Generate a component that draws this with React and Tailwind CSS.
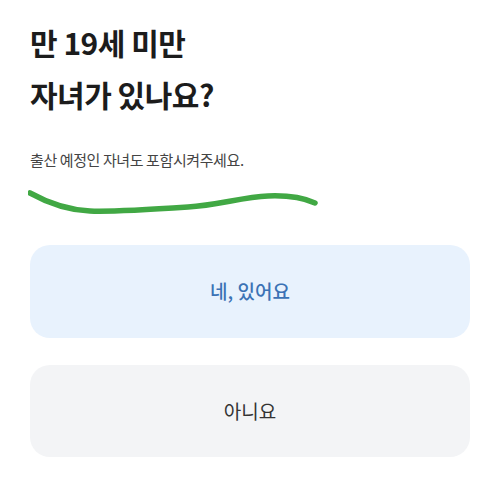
export default function App() {
  return (
    <div
      className="min-h-[499px] w-[500px] bg-white px-[30px] pt-[16px]"
      style={{ fontFamily: '"Noto Sans CJK KR", "Noto Sans", sans-serif' }}
    >
      <h1 className="text-[30px] font-semibold leading-[52px] tracking-[-0.5px] text-[#1c1c1c]">
        만 19세 미만
        <br />
        자녀가 있나요?
      </h1>

      <p className="mt-[29px] text-[15px] leading-[22px] tracking-[-0.4px] text-[#444]">
        출산 예정인 자녀도 포함시켜주세요.
      </p>

      <svg width="300" height="30" viewBox="0 0 300 30" className="mt-[18px] -ml-[2px] block">
        <path
          d="M2 4 C 20 14, 40 21, 62 22 S 130 20, 160 18 S 215 8, 240 7 S 278 10, 287 14"
          fill="none"
          stroke="#41a844"
          strokeWidth="5.5"
          strokeLinecap="round"
        />
      </svg>

      <div className="mt-[26px] flex flex-col gap-[27px]">
        <button className="h-[93px] w-full rounded-[20px] bg-[#e8f2fd] text-[19px] font-medium text-[#3b72b5]">
          네, 있어요
        </button>
        <button className="h-[92px] w-full rounded-[20px] bg-[#f3f4f6] text-[19px] text-[#333]">
          아니요
        </button>
      </div>
    </div>
  );
}
